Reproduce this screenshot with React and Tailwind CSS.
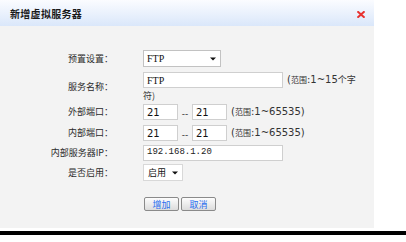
import React from "react";

const cjk = { fontFamily: '"Noto Sans CJK SC", "Noto Sans", sans-serif' };
const latin = { fontFamily: '"DejaVu Sans", "Noto Sans CJK SC", sans-serif' };
const mono = { fontFamily: '"Liberation Mono", "Noto Sans CJK SC", monospace' };

function Range({ text }) {
  return (
    <span className="ml-[4px] text-[10px] text-[#333] leading-[12px]" style={latin}>
      (<span className="text-[8px]" style={cjk}>范围</span>:{text}
    </span>
  );
}

function Label({ children }) {
  return (
    <div className="w-[113px] shrink-0 text-right text-[9px] text-[#2a2a2a] leading-[12px]" style={cjk}>
      {children}
    </div>
  );
}

function Arrow() {
  return (
    <svg width="6" height="4" viewBox="0 0 6 4" className="shrink-0">
      <path d="M0 0.5 L6 0.5 L3 3.5 Z" fill="#111" />
    </svg>
  );
}

export default function App() {
  return (
    <div className="w-[406px] h-[242px] bg-white relative overflow-hidden">
      <div className="w-[374px] h-[228px] bg-[#f3f3f3] flex flex-col">
        <div className="h-[26px] flex items-center justify-between pl-[10px] pr-[8px] bg-gradient-to-b from-[#fbfcff] to-[#dae7fa]">
          <span className="text-[10px] font-bold text-[#1a1a1a] tracking-[0.3px]" style={cjk}>
            新增虚拟服务器
          </span>
          <svg width="8" height="7" viewBox="0 0 8 7" className="mr-[1px] mt-[2px]">
            <path d="M1.2 1 L6.8 6 M6.8 1 L1.2 6" stroke="#e8322f" strokeWidth="2" strokeLinecap="square" />
          </svg>
        </div>

        <div className="flex flex-col pt-[24px]">
          {/* Row 1 */}
          <div className="flex items-center h-[17px]">
            <Label>预置设置：</Label>
            <div className="ml-[30px] w-[78px] h-[17px] bg-white border border-[#c2c2c2] flex items-center justify-between pl-[3px] pr-[4px]">
              <span className="text-[10px] text-[#111]" style={{ fontFamily: '"Liberation Serif", serif' }}>FTP</span>
              <Arrow />
            </div>
          </div>

          {/* Row 2 */}
          <div className="flex items-center mt-[5px]">
            <Label>服务名称：</Label>
            <div className="ml-[30px] flex flex-col">
              <div className="flex items-center">
                <div className="w-[140px] h-[16px] bg-white border border-[#cfcfcf] flex items-center pl-[3px]">
                  <span className="text-[10px] text-[#111]" style={{ fontFamily: '"Liberation Serif", serif' }}>FTP</span>
                </div>
                <span className="ml-[4px] text-[10px] text-[#333] leading-[12px]" style={latin}>
                  (<span className="text-[8px]" style={cjk}>范围</span>:1~15<span className="text-[9px]" style={cjk}>个字</span>
                </span>
              </div>
              <span className="text-[9px] text-[#333] leading-[12px] mt-[2px]" style={cjk}>符)</span>
            </div>
          </div>

          {/* Row 3 */}
          <div className="flex items-center h-[16px] mt-[2px]">
            <Label>外部端口：</Label>
            <div className="ml-[30px] flex items-center">
              <div className="w-[35px] h-[16px] bg-white border border-[#cfcfcf] flex items-center pl-[3px]">
                <span className="text-[10px] text-[#111]" style={latin}>21</span>
              </div>
              <span className="w-[14px] text-center text-[9px] text-[#333] mt-[4px] leading-none" style={latin}>--</span>
              <div className="w-[35px] h-[16px] bg-white border border-[#cfcfcf] flex items-center pl-[3px]">
                <span className="text-[10px] text-[#111]" style={latin}>21</span>
              </div>
              <Range text="1~65535)" />
            </div>
          </div>

          {/* Row 4 */}
          <div className="flex items-center h-[16px] mt-[5px]">
            <Label>内部端口：</Label>
            <div className="ml-[30px] flex items-center">
              <div className="w-[35px] h-[16px] bg-white border border-[#cfcfcf] flex items-center pl-[3px]">
                <span className="text-[10px] text-[#111]" style={latin}>21</span>
              </div>
              <span className="w-[14px] text-center text-[9px] text-[#333] mt-[4px] leading-none" style={latin}>--</span>
              <div className="w-[35px] h-[16px] bg-white border border-[#cfcfcf] flex items-center pl-[3px]">
                <span className="text-[10px] text-[#111]" style={latin}>21</span>
              </div>
              <Range text="1~65535)" />
            </div>
          </div>

          {/* Row 5 */}
          <div className="flex items-center h-[16px] mt-[4px]">
            <Label>内部服务器IP：</Label>
            <div className="ml-[30px] w-[140px] h-[16px] bg-white border border-[#cfcfcf] flex items-center pl-[3px]">
              <span className="text-[9px] text-[#222]" style={mono}>192.168.1.20</span>
            </div>
          </div>

          {/* Row 6 */}
          <div className="flex items-center h-[17px] mt-[3px]">
            <Label>是否启用：</Label>
            <div className="ml-[30px] w-[40px] h-[17px] bg-white border border-[#d8d8d8] flex items-center justify-between pl-[4px] pr-[4px]">
              <span className="text-[9px] text-[#111]" style={cjk}>启用</span>
              <Arrow />
            </div>
          </div>

          {/* Buttons */}
          <div className="flex items-center gap-[2px] mt-[16px] ml-[144px]">
            <button className="w-[35px] h-[14px] rounded-[2px] border border-[#8a8a8a] bg-gradient-to-b from-[#fdfdfd] to-[#dcdcdc] flex items-center justify-center text-[9px] text-[#2a6ef0] leading-none" style={cjk}>
              增加
            </button>
            <button className="w-[35px] h-[14px] rounded-[2px] border border-[#8a8a8a] bg-gradient-to-b from-[#fdfdfd] to-[#dcdcdc] flex items-center justify-center text-[9px] text-[#2a6ef0] leading-none" style={cjk}>
              取消
            </button>
          </div>
        </div>
      </div>
      <div className="mt-[3px] h-[4px] w-full bg-black" />
    </div>
  );
}
